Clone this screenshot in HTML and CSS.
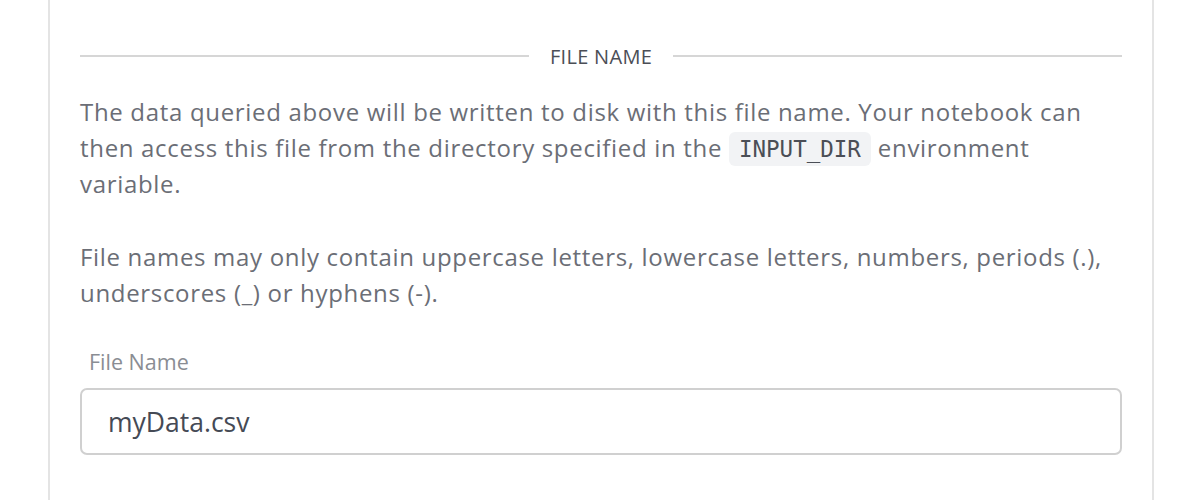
FILE: index.html
```html
<!DOCTYPE html>
<html>
<head>
<meta charset="utf-8">
<link rel="stylesheet" href="styles.css">
</head>
<body>
<div class="card">
  <div class="divider">
    <span class="divider-line"></span>
    <span class="divider-title">FILE NAME</span>
    <span class="divider-line"></span>
  </div>
  <p class="text">The data queried above will be written to disk with this file name. Your notebook can then access this file from the directory specified in the <code class="code">INPUT_DIR</code> environment variable.</p>
  <p class="text text-second">File names may only contain uppercase letters, lowercase letters, numbers, periods (.), underscores (_) or hyphens (-).</p>
  <label class="label">File Name</label>
  <div class="input">myData.csv</div>
</div>
</body>
</html>
```

FILE: styles.css
```css
html, body {
  margin: 0;
  padding: 0;
  background: #ffffff;
}
body {
  font-family: "Open Sans", "Noto Sans", sans-serif;
}
.card {
  margin-left: 48px;
  width: 1042px;
  padding: 42px 30px 60px 30px;
  border-left: 2px solid #e4e4e4;
  border-right: 2px solid #e4e4e4;
  min-height: 460px;
}
.divider {
  display: flex;
  align-items: center;
  gap: 21px;
  height: 28px;
}
.divider-line {
  flex: 1;
  height: 2px;
  background: #d6d6d6;
}
.divider-title {
  font-size: 20px;
  color: #4b4e56;
  letter-spacing: 0.3px;
}
.text {
  font-size: 24px;
  letter-spacing: 0.68px;
  line-height: 36px;
  color: #6b6e76;
  margin: 24px 0 0 0;
}
.text-second {
  margin-top: 37px;
}
.code {
  display: inline-block;
  font-family: "DejaVu Sans Mono", monospace;
  font-size: 22.5px;
  line-height: 34px;
  letter-spacing: 0;
  color: #4b4e56;
  background: #f2f3f5;
  border-radius: 6px;
  padding: 0 10px;
}
.label {
  display: block;
  font-size: 21.5px;
  line-height: 26px;
  color: #8a8d93;
  margin: 38px 0 13px 9px;
}
.input {
  height: 63px;
  border: 2px solid #d0d0d0;
  border-radius: 7px;
  padding: 0 26px;
  display: flex;
  align-items: center;
  font-size: 26.5px;
  color: #454a55;
}
```
